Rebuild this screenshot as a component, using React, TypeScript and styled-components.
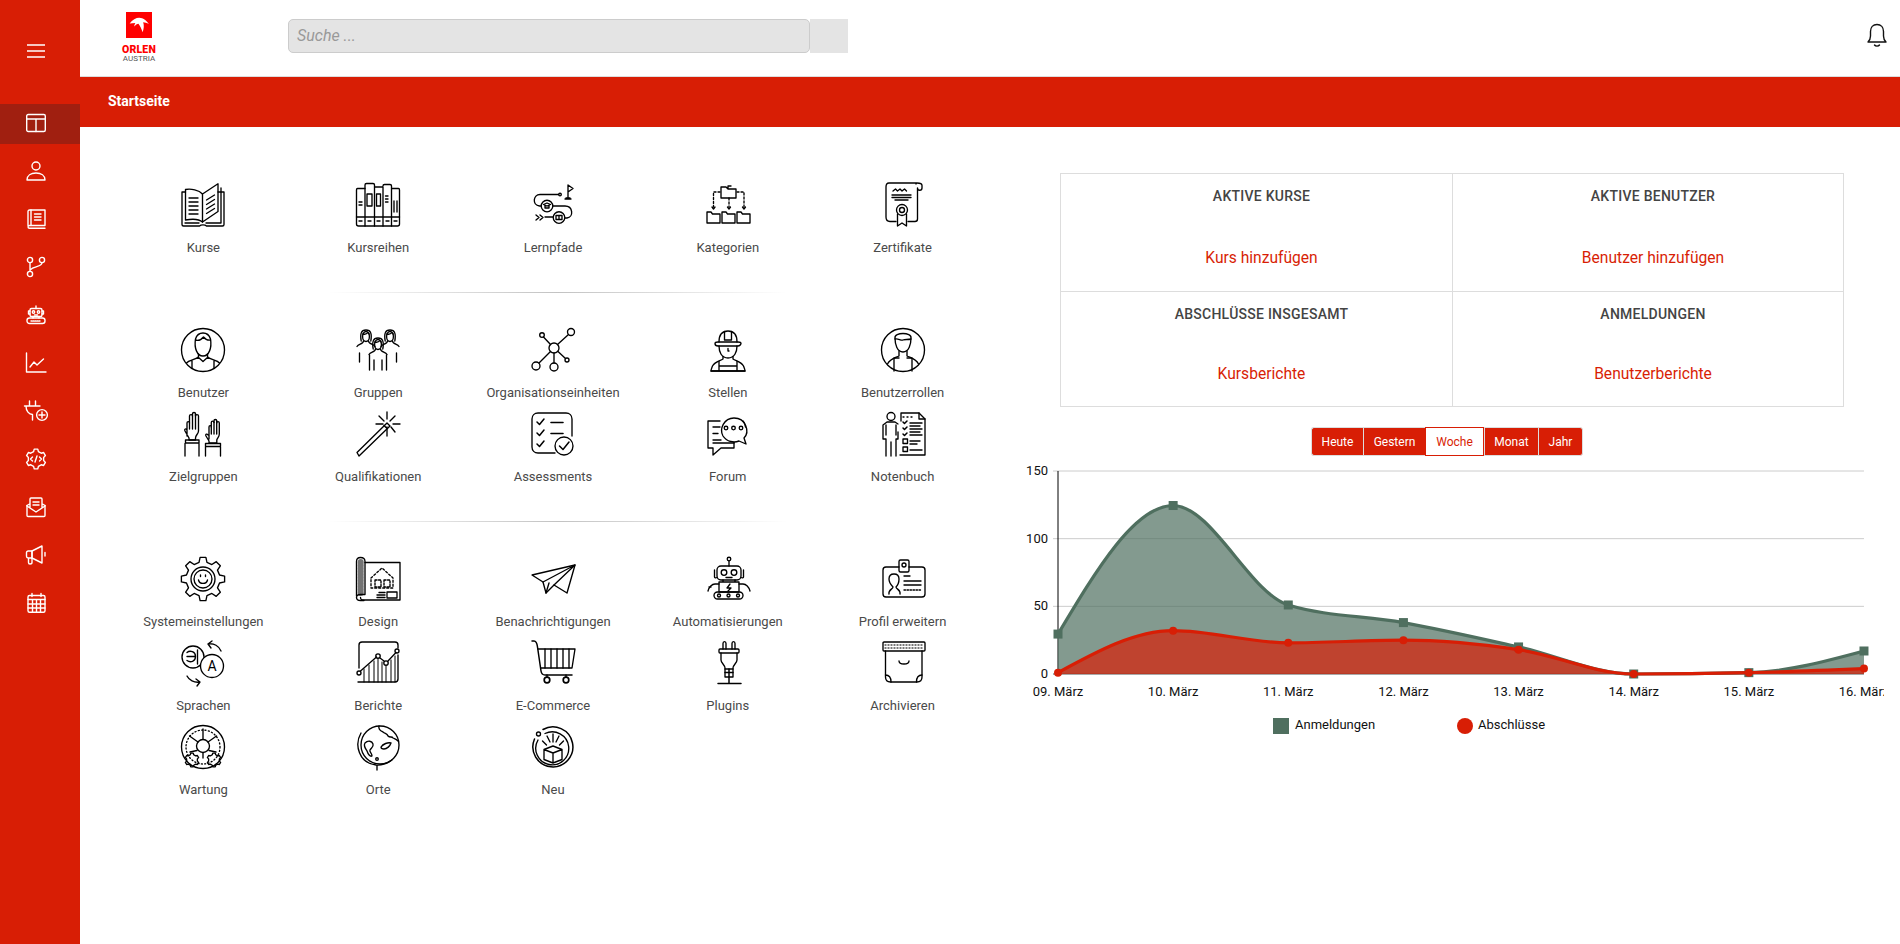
import React from 'react';
import styled, { createGlobalStyle } from 'styled-components';

const RED = '#d81e05';
const GREEN = '#4f6f5f';

const GlobalStyle = createGlobalStyle`
  html, body {
    margin: 0;
    padding: 0;
    background: #fff;
    font-family: Roboto, "Liberation Sans", sans-serif;
  }
  * {
    box-sizing: border-box;
  }
`;

const Page = styled.div`
  display: flex;
  min-height: 100vh;
  overflow: hidden;
`;

const Sidebar = styled.nav`
  width: 80px;
  flex: none;
  background: ${RED};
  display: flex;
  flex-direction: column;
  gap: 8px;
`;

const MenuButton = styled.div`
  height: 96px;
  padding: 44px 0 0 27px;
  svg {
    display: block;
  }
`;

const SideItem = styled.div<{ $active?: boolean }>`
  height: 40px;
  display: flex;
  align-items: center;
  padding: 0 0 2px 26px;
  background: ${props => (props.$active ? '#a01f10' : 'transparent')};
`;

const SideIcon = styled.svg`
  width: 20px;
  height: 20px;
  overflow: visible;
  fill: none;
  stroke: #fff;
  stroke-width: 1.4;
  stroke-linecap: round;
  stroke-linejoin: round;
`;

const Content = styled.div`
  flex: 1;
  min-width: 0;
`;

const Header = styled.header`
  height: 77px;
  background: #fff;
  border-bottom: 1px solid #ddd;
  display: flex;
  align-items: flex-start;
  padding-left: 40px;
  position: relative;
`;

const Logo = styled.div`
  width: 38px;
  padding-top: 12px;
  display: flex;
  flex-direction: column;
  align-items: center;
  svg {
    display: block;
  }
`;

const LogoName = styled.span`
  margin-top: 6px;
  font-size: 10.5px;
  line-height: 11px;
  font-weight: 900;
  color: #f00;
  letter-spacing: 0.2px;
`;

const LogoCountry = styled.span`
  font-size: 8px;
  line-height: 8px;
  color: #555;
`;

const Search = styled.div`
  display: flex;
  margin: 19px 0 0 130px;
`;

const SearchInput = styled.div`
  width: 522px;
  height: 34px;
  background: #e4e4e4;
  border: 1px solid #ccc;
  border-radius: 5px;
  padding-left: 8px;
  font-style: italic;
  font-size: 16px;
  line-height: 32px;
  color: #999;
`;

const SearchButton = styled.div`
  width: 38px;
  height: 34px;
  background: #e4e4e4;
`;

const Bell = styled.svg`
  position: absolute;
  right: 13px;
  top: 23px;
  width: 20px;
  height: 24px;
  fill: none;
  stroke: #111;
  stroke-width: 1.4;
  stroke-linecap: round;
  stroke-linejoin: round;
`;

const Breadcrumb = styled.div`
  height: 50px;
  background: ${RED};
  padding-left: 28px;
  color: #fff;
  font-size: 14px;
  font-weight: 700;
  line-height: 48px;
`;

const Main = styled.main`
  display: flex;
  align-items: flex-start;
  padding-left: 36px;
`;

const LeftPanel = styled.section`
  width: 874px;
  padding-top: 56px;
`;

const TileGrid = styled.div`
  display: grid;
  grid-template-columns: repeat(5, 1fr);
`;

const Tile = styled.div`
  height: 84px;
  display: flex;
  flex-direction: column;
  align-items: center;
  white-space: nowrap;
`;

const TileIcon = styled.svg`
  width: 44px;
  height: 44px;
  flex: none;
  overflow: visible;
  fill: none;
  stroke: #000;
  stroke-width: 1.35;
  stroke-linecap: round;
  stroke-linejoin: round;
  margin-bottom: 12px;
`;

const TileLabel = styled.span`
  font-size: 13px;
  line-height: 18px;
  color: #4a4a4a;
`;

const Divider = styled.hr`
  width: 460px;
  height: 1px;
  border: 0;
  margin: 25px 0 35px 212px;
  background: linear-gradient(to right, rgba(0, 0, 0, 0), rgba(0, 0, 0, 0.24) 50%, rgba(0, 0, 0, 0));
`;

const RightPanel = styled.section`
  width: 864px;
  margin-left: 30px;
  padding-top: 46px;
`;

const StatsTable = styled.div`
  width: 784px;
  height: 234px;
  margin-left: 40px;
  display: grid;
  grid-template-columns: 391px 1fr;
  grid-template-rows: 117px 1fr;
  border: 1px solid #ddd;
`;

const StatCell = styled.div<{ $right?: boolean; $bottom?: boolean }>`
  display: flex;
  flex-direction: column;
  align-items: center;
  padding: 13px 0 0 10px;
  border-left: ${props => (props.$right ? '1px solid #ddd' : '0')};
  border-top: ${props => (props.$bottom ? '1px solid #ddd' : '0')};
`;

const StatTitle = styled.div`
  font-size: 14px;
  line-height: 18px;
  font-weight: 500;
  color: #444;
  text-transform: uppercase;
  letter-spacing: 0.25px;
`;

const StatLink = styled.a<{ $bottom?: boolean }>`
  margin-top: ${props => (props.$bottom ? '40px' : '42px')};
  font-size: 15.6px;
  line-height: 22px;
  color: ${RED};
`;

const RangeGroup = styled.div`
  display: flex;
  justify-content: center;
  margin: 20px 0 0;
  padding-right: 10px;
`;

const RangeButton = styled.button<{ $active?: boolean; $w: number }>`
  width: ${props => props.$w}px;
  height: 29px;
  padding: 0;
  font-family: inherit;
  font-size: 12px;
  color: ${props => (props.$active ? RED : '#fff')};
  background: ${props => (props.$active ? '#fff' : RED)};
  border: 1px solid ${props => (props.$active ? RED : '#ddd')};
  border-width: ${props => (props.$active ? '1px' : '1px 0 1px 1px')};
  &:first-child {
    border-radius: 3px 0 0 3px;
  }
  &:last-child {
    border-radius: 0 3px 3px 0;
    border-right-width: 1px;
  }
`;

const ChartSvg = styled.svg`
  display: block;
  width: 864px;
  height: 280px;
  margin-top: 4px;
  font-family: Roboto, sans-serif;
  font-size: 13px;
`;

const gearPath = (cx: number, cy: number, ro: number, ri: number, teeth: number) => {
  const step = (Math.PI * 2) / teeth;
  const pt = (r: number, a: number) =>
    `${(cx + r * Math.sin(a)).toFixed(2)} ${(cy - r * Math.cos(a)).toFixed(2)}`;
  let d = '';
  for (let i = 0; i < teeth; i++) {
    const a = i * step;
    d += `${i === 0 ? 'M' : 'L'}${pt(ro, a - step * 0.17)}L${pt(ro, a + step * 0.17)}L${pt(ri, a + step * 0.3)}L${pt(ri, a + step * 0.7)}`;
  }
  return d + 'Z';
};

const sideIcons: React.ReactNode[] = [
  <>
    <rect x=".7" y="1.500" width="18.600" height="17" rx="1.500" />
    <path d="M.7 6h18.600M10 6v12.500" />
  </>,
  <>
    <circle cx="10" cy="5" r="4" />
    <path d="M1 19c0-4.500 4-7 9-7s9 2.500 9 7z" />
  </>,
  <>
    <path d="M2 16.500V2.500C2 1.500 2.500 1 3.500 1H19v15.500H3.500C2.500 16.500 2 17 2 17.800S2.500 19.300 3.500 19.300H19" />
    <path d="M5 1v15.500M8.500 5H15M8.500 8H15M8.500 11H15" />
  </>,
  <>
    <circle cx="4" cy="3" r="2.600" />
    <circle cx="4" cy="17" r="2.600" />
    <circle cx="16" cy="3" r="2.600" />
    <path d="M4 5.600v8.800M16 5.600C16 10.500 8 8.500 4 13" />
  </>,
  <>
    <rect x="4" y="3.500" width="12" height="8" rx="1.500" />
    <circle cx="7.500" cy="7" r="1.200" />
    <circle cx="12.500" cy="7" r="1.200" />
    <path d="M10 3.500V1M4 6H2.500v3H4M16 6h1.500v3H16M8.500 10h3M7 11.500v1.500M13 11.500v1.500" />
    <rect x="1" y="13" width="18" height="5.500" rx="2.500" />
    <path d="M5 16h10" strokeDasharray="1 1" />
  </>,
  <>
    <path d="M.5 0V19H20" />
    <path d="M4 14l4-5 3 3 6.500-6" />
  </>,
  <>
    <path d="M3.500 0v4.500M9.500 0v4.500M-1.500 5H14M0 5c0 5 3 8.500 6.500 8.500M6.500 13.500V19" />
    <circle cx="16" cy="14" r="5.400" />
    <path d="M16 11v6M13 14h6" />
  </>,
  <>
    <path d={gearPath(10, 10, 10, 7.800, 6)} />
    <path d="M6.500 8L4.500 10l2 2M13.500 8l2 2-2 2M11 7L9 13" />
  </>,
  <>
    <path d="M1 8.500v10c0 .6.4 1 1 1h16c.6 0 1-.4 1-1v-10" />
    <path d="M4 11V2c0-.6.4-1 1-1h10c.6 0 1 .4 1 1v9M1 8.500l2.500-1.500M19 8.500L16.500 7M1 9l9 6 9-6" />
    <path d="M7 5h6M7 8h6" />
  </>,
  <>
    <path d="M6 6l10-5v17L6 13z" />
    <path d="M6 6H2.200C1.200 6 .5 6.700 .5 7.700v3.600c0 1 .7 1.700 1.700 1.700H6zM2.500 13v4.500c0 1 .8 1.500 1.500 1.500s2-.5 2-1.500V13M19 7.500v3.500" />
  </>,
  <>
    <rect x="2" y="2.500" width="17" height="16.800" rx="1.500" />
    <path d="M2 6.500h17M6 .5v3M15 .5v3M2 11h17M2 15h17M6.500 6.500v12.800M10.500 6.500v12.800M14.500 6.500v12.800" />
  </>,
];

type TileDef = { label: string; icon: React.ReactNode };

const smallPerson = (
  <>
    <ellipse cx="0" cy="6.500" rx="3.400" ry="5" />
    <path d="M-4.800 11C-6 4-5 0 0 0s6 4 4.800 11M-2.500 11c0 3-5 3-6.500 5.500M2.500 11c0 3 5 3 6.500 5.500M-3.200 4c2 .5 4 0 5-1.500 .5 1 1 1.500 1.500 1.500" />
  </>
);

const tiles: TileDef[][] = [
  [
    {
      label: 'Kurse',
      icon: (
        <>
          <path d="M21.500 11C18 7 10 5.500 4.500 6.500V37C10 36 18 36 21.500 39" />
          <path d="M21.500 11L37 .8V28.500L21.500 39z" />
          <path d="M4.500 9H1v32.500c0 1 .5 1.500 1.500 1.500H18.500c1.500-1.500 5.500-1.500 7 0H41.500c1 0 1.500-.5 1.500-1.500V9h-6" />
          <path d="M40 5v35H25M4 40H18" />
          <path d="M8 15h9M8 19h9M8 23h9M8 27h9M8 31h9M25.500 17l8-5M25.500 21.500l8-5M25.500 26l8-5M25.500 30.500l8-5" />
        </>
      ),
    },
    {
      label: 'Kursreihen',
      icon: (
        <>
          <path d="M9 5.500H1.500C.7 5.500.5 6 .5 7V41c0 1.300.7 2 2 2H41.500c1.300 0 2-.7 2-2V7c0-1-.2-1.500-1-1.500H36" />
          <path d="M9 43V2c0-1 .5-1.500 1.500-1.500H17c1 0 1.500.5 1.500 1.500V43M18.500 4H27V43M27 3c0-1 .5-1.500 1.500-1.500H34c1 0 1.500.5 1.500 1.500V43" />
          <path d="M.5 34H43.500" />
          <rect x="11" y="11" width="5" height="12" />
          <rect x="20.500" y="11" width="4" height="12" />
          <path d="M3 19h3M3 22h3M29.500 13h2.500M29.500 16h2.500M29.500 19h2.500M38 18v11M41 18v11M3 38h3M12 38h3M21 38h3M30 38h3M38 38h3" />
        </>
      ),
    },
    {
      label: 'Lernpfade',
      icon: (
        <>
          <path d="M37 15V2l5 3.500L37 9M34 16h6M35 16v-1h4v1" />
          <circle cx="29" cy="11.500" r="1.300" />
          <path d="M27.500 11.500H9C2 11.500 1 22 8.500 23H10M22 23H34C42 23 43 34 36 35H34M22 34H14" />
          <circle cx="16" cy="23" r="5.800" />
          <path d="M12.500 21.500L16 20l3.500 1.500L16 23zM14 22.500v2.500h4v-2.500" />
          <circle cx="28" cy="34.500" r="5.800" />
          <path d="M25 32.500h6v4h-6zM28 32.500v4M5 32l3 2.500L5 37M9 32l3 2.500L9 37" />
        </>
      ),
    },
    {
      label: 'Kategorien',
      icon: (
        <>
          <path d="M15 4h5l2 2h8v9H15zM22 6V3h3" />
          <path d="M14 9H7.500v15M31 9h7v15M23 15v9" strokeDasharray="2 2" />
          <path d="M6 24l1.500 2 1.500-2M21.500 24l1.500 2 1.500-2M36.500 24l1.500 2 1.500-2" />
          <path d="M1 29h4l1.500 2H14V40H1zM16 29h4l1.500 2H29V40H16zM31 29h4l1.500 2H44V40H31z" />
        </>
      ),
    },
    {
      label: 'Zertifikate',
      icon: (
        <>
          <path d="M36 0H8C5.500 0 5 2 5 4V34C5 37 7 38.500 9 38.500H15M27 38.500H34c1.500 0 2.500-1 2.500-2.500V5c0 3 4.500 3 4.500 0V2.500C41 1 39 0 36 0c-1 0-1 1-1 1" />
          <path d="M12 8l2.500-2 2 2 2.500-2 2 2 2.500-2 2 2M11 12H30M11 14.500H30M14 17H27" />
          <circle cx="21" cy="27" r="5.500" />
          <circle cx="21" cy="27" r="2.500" />
          <path d="M16.500 31v12l4.500-3 4.500 3V31" />
        </>
      ),
    },
  ],
  [
    {
      label: 'Benutzer',
      icon: (
        <>
          <circle cx="22" cy="22" r="21.500" />
          <path d="M14.500 11C13 20 16 28 22 28s9-8 7.500-17C27 3 17 3 14.500 11z" />
          <path d="M14.500 12c3 1 6-.5 8-3 2 2.500 4 3.500 7 3" />
          <path d="M17.500 26v3C14 32 8 32 5.500 35M26.500 26v3C30 32 36 32 38.500 35M17 29l5 4.500L27 29M11 33v7M33 33v7" />
        </>
      ),
    },
    {
      label: 'Gruppen',
      icon: (
        <>
          <g transform="translate(10 2)">{smallPerson}</g>
          <g transform="translate(34 2)">{smallPerson}</g>
          <g transform="translate(22 10)">{smallPerson}</g>
          <path d="M3.500 25v9M40.500 25v9M13.500 27v15M18 32v10M26 32v10M30.500 27v15" />
        </>
      ),
    },
    {
      label: 'Organisationseinheiten',
      icon: (
        <>
          <circle cx="23" cy="20" r="5" />
          <circle cx="40" cy="4" r="3.500" />
          <circle cx="11" cy="7" r="2.300" />
          <circle cx="36" cy="32" r="2" />
          <circle cx="5" cy="38" r="4" />
          <circle cx="23" cy="39" r="4" />
          <path d="M26.500 16.500L37.500 6.500M19.500 16.500L12.500 9M19.500 23.500L8 35M23 25v10M27 23.500L34.500 30.500" />
        </>
      ),
    },
    {
      label: 'Stellen',
      icon: (
        <>
          <path d="M13 14c0-7 3-11 9-11s9 4 9 11" />
          <path d="M9 15.500C9 14.500 10.500 14 12 14H32c1.500 0 3 .5 3 1.500S33.500 18 32 18H12C10.500 18 9 17 9 15.500z" />
          <path d="M18.500 3.500V12h7V3.500" />
          <path d="M13 18c0 6 2.500 12 9 12s9-6 9-12M22 20.500v2.500h1" />
          <path d="M17 28.500V31C14 33 9 33.500 6.500 38c-.5 1.500-1.500 3.500-1.500 5H39c0-1.500-1-3.500-1.500-5C35 33.500 30 33 27 31v-2.500" />
          <path d="M13 33.500V43M31 33.500V43M13 38H31M5 43H39" />
        </>
      ),
    },
    {
      label: 'Benutzerrollen',
      icon: (
        <>
          <circle cx="22" cy="22" r="21.500" />
          <path d="M14 10C13 4 31 4 30 10c0 6-2 14-8 14s-8-8-8-14z" />
          <path d="M14 11c3-1 6 2 8 1 2-1 5 0 8-1" />
          <path d="M18 23v5C14 30 9 31 6.500 36M26 23v5c4 2 9 3 11.500 8" />
          <path d="M13 30V43M31 30V43M13 30h5M26 30h5" />
        </>
      ),
    },
    {
      label: 'Zielgruppen',
      icon: (
        <>
          <path d="M6 24V11c0-1.800 2.500-1.800 2.500 0V4c0-1.800 3-1.800 3 0V1.800c0-1.800 3-1.800 3 0V4c0-1.800 3-1.800 3 0V19c0 3-3 4-3 7v2H8v-2L4 19c-1-2 1-3 2-1" />
          <path d="M8.500 11v6M11.500 4v13M14.500 2v15" />
          <path d="M4.500 28H18v3H4.500zM4 31.500V44M18 31.500V44" />
          <path d="M28 27V15c0-1.800 2.300-1.800 2.300 0V10.500c0-1.800 2.700-1.800 2.700 0V8.800c0-1.800 2.700-1.800 2.700 0V11c0-1.800 2.600-1.800 2.600 0V22c0 3-2 4-2.500 6v3H28v-2l-3-5c-1-2 1-2.500 2-1" />
          <path d="M30.300 15v7M33 10v12M35.700 9v13" />
          <path d="M24.500 31.500H39.500v3H24.500zM24.500 35V44M39.500 35V44" />
        </>
      ),
    },
    {
      label: 'Qualifikationen',
      icon: (
        <>
          <path d="M1 40.500L31 11l3 3L3 44z" />
          <path d="M28 13.500l3 3M31 0v7M31 15v9M20 12h7M37 12h7M23 4l5 5M39 4l-5 5M35 15l4 5" />
        </>
      ),
    },
    {
      label: 'Assessments',
      icon: (
        <>
          <path d="M24 41H7c-3.500 0-6-2.500-6-6V7c0-3.500 2.500-6 6-6H35c3.500 0 6 2.500 6 6V24" />
          <path d="M6 10l2.500 2.500L13 7M6 21l2.500 2.500L13 18M6 32l2.500 2.500L13 29" strokeWidth="1.500" />
          <path d="M20 10.500H32M20 21.500H32" strokeWidth="1.600" />
          <circle cx="33" cy="34" r="9" />
          <path d="M28.500 34l3.500 3.500L38 30" strokeWidth="1.500" />
        </>
      ),
    },
    {
      label: 'Forum',
      icon: (
        <>
          <path d="M14 9H2V36H7V43L15 36H28V30" />
          <path d="M7 15h7M7 21.500h5M7 28h8M7 31h21" />
          <path d="M17 24c-4-7 1-18 11-18 12 0 16 14 10 20l2 6-7-3c-5 2-12 1-16-5z" fill="#fff" />
          <path d="M37 9c1.500 1.500 2 3 2.500 6" />
          <circle cx="20" cy="16" r="1.800" />
          <circle cx="27.500" cy="16" r="1.800" />
          <circle cx="35" cy="16" r="1.800" />
        </>
      ),
    },
    {
      label: 'Notenbuch',
      icon: (
        <>
          <circle cx="10" cy="4.500" r="4" />
          <path d="M17 12l-3-2H6L2 13V27h3V44M15 27h2V20M15 44V27M10 44V30M5 13v10M15 13v10" />
          <path d="M20 9V1H38L44 7V43H19" />
          <path d="M38 1V7H44" />
          <path d="M22 5h2M26 5h2M30 5h2" strokeDasharray="1 1" />
          <path d="M22 10l1.500 1.500L26 9M22 16l1.500 1.500L26 15M22 22l1.500 1.500L26 21" strokeWidth="1.500" />
          <path d="M29 11H41M29 14H39M29 17H41M29 20H39M29 23H41M29 29H39M29 32H36M29 38H41" />
          <rect x="22" y="27" width="4.500" height="4.500" />
          <rect x="22" y="35" width="4.500" height="4.500" />
        </>
      ),
    },
  ],
  [
    {
      label: 'Systemeinstellungen',
      icon: (
        <>
          <path d={gearPath(22, 22, 21.800, 17, 8)} />
          <circle cx="22" cy="22" r="12" />
          <circle cx="22" cy="22" r="9" />
          <path d="M17.500 23c1 4.500 8 4.500 9 0M19.500 18v1.500M24.500 18v1.500" />
        </>
      ),
    },
    {
      label: 'Design',
      icon: (
        <>
          <path d="M9 5.500H44V43H6" />
          <path d="M.5 39V4.500C.5 2 2 .5 4.500 .5S9 2 9 4.500V37.500H4.500C2 37.500.5 39 .5 40.500S2 43.500 4.500 43.500H8C6 43.500 4.500 42 4.500 40.500" />
          <path d="M4.700 5v31" strokeWidth="6" strokeDasharray="1 2" opacity=".55" />
          <path d="M15 21L26 11l11 10v10H15z" strokeDasharray="2 2" />
          <path d="M19 23h6v7h-6zM28 23h6v7h-6z" strokeDasharray="2 1.500" />
          <rect x="31" y="35" width="10" height="6" strokeWidth="1.300" />
          <path d="M23 35.500h6M21 38h8M21 40.500h8" />
        </>
      ),
    },
    {
      label: 'Benachrichtigungen',
      icon: (
        <>
          <path d="M1 18L44 8 36 36 23 28l-8 8-3-11z" />
          <path d="M12 25L44 8 23 28M15 36l3-10" />
        </>
      ),
    },
    {
      label: 'Automatisierungen',
      icon: (
        <>
          <circle cx="23" cy="2" r="1.800" />
          <path d="M23 4v5" />
          <rect x="11" y="9" width="24" height="14" rx="4" />
          <circle cx="18" cy="15.500" r="2.800" />
          <circle cx="28" cy="15.500" r="2.800" />
          <path d="M20 20.500H26M8.500 13v7c0 1 1.500 1 2.500 .5M37.500 13v7c0 1-1.500 1-2.500 .5" />
          <path d="M13 25H33V35H13zM17 23v2M29 23v2" />
          <path d="M24 27l-3 4h4l-3 3" strokeWidth="1.300" />
          <path d="M13 27H9C6 27 3 30 2 34M33 27h4c3 0 6 3 7 7M5 30l-2 0" />
          <rect x="8" y="35" width="29" height="7" rx="3.500" />
          <circle cx="13" cy="38.500" r="1.500" />
          <circle cx="22.500" cy="38.500" r="1.500" />
          <circle cx="32" cy="38.500" r="1.500" />
        </>
      ),
    },
    {
      label: 'Profil erweitern',
      icon: (
        <>
          <path d="M18 10H5C3 10 2 11 2 13V37c0 2 1 3 3 3H41c2 0 3-1 3-3V13c0-2-1-3-3-3H28" />
          <rect x="18" y="3" width="10" height="12" rx="1.500" />
          <circle cx="23" cy="8" r="2" />
          <path d="M8 37c-1-4 4-5 4-7-2-2-4-5-4-8 0-3 2-5 5-5s5 2 5 5c0 3-1 6-3 8 0 2 5 3 4 7" />
          <path d="M23 19h6M23 24H40M23 28H40" />
          <path d="M23 33H40" strokeDasharray="1.500 1.500" />
        </>
      ),
    },
    {
      label: 'Sprachen',
      icon: (
        <>
          <circle cx="12" cy="16" r="11" />
          <circle cx="31" cy="25" r="11.500" fill="#fff" />
          <path d="M6 11.500c3-2.500 8.500-1 8.500 4s-5 6.500-8.500 4M6 15.500h8.500M16.500 9v14" />
          <text x="31" y="30" textAnchor="middle" fontFamily="Roboto, sans-serif" fontSize="14" fill="#000" stroke="none">A</text>
          <path d="M27 3c6-1 11 2 13 7M31 0l-4 3 3 4" />
          <path d="M19 41c-6 1-11-2-13-6M15 38l4 3-3 4" />
        </>
      ),
    },
    {
      label: 'Berichte',
      icon: (
        <>
          <path d="M3 27V4c0-2 1-3 3-3H39c2 0 3 1 3 3V7M42 14V38c0 2-1 3-3 3H2" />
          <path d="M4.500 30L20.500 16M24 17l4 3M32 20L40 11.500" strokeWidth="1.300" />
          <circle cx="3" cy="32" r="2" />
          <circle cx="22" cy="15" r="2.200" />
          <circle cx="30" cy="22" r="2.200" />
          <circle cx="41" cy="10" r="2" />
          <path d="M8 28V41M13 24V41M18 20V41M22 18V41M26 21V41M30 25V41M35 19V41M39 15V41" strokeWidth="1" />
        </>
      ),
    },
    {
      label: 'E-Commerce',
      icon: (
        <>
          <path d="M1 0H3C5 0 6 2 6.500 6L10 30C10.500 33 12 34 14 34H41" strokeWidth="1.500" />
          <path d="M7 8H44L41 27H10" />
          <path d="M14 8V27M20 8V27M26 8V27M32 8V27M38 8V27" />
          <circle cx="16" cy="39" r="2.800" strokeWidth="1.700" />
          <circle cx="35" cy="39" r="2.800" strokeWidth="1.700" />
          <path d="M16 34v2M35 34v2" />
        </>
      ),
    },
    {
      label: 'Plugins',
      icon: (
        <>
          <path d="M17 8V2.500c0-2.500 3-2.500 3 0V8M26 8V2.500c0-2.500 3-2.500 3 0V8" />
          <rect x="13" y="8" width="20" height="4" rx="1" />
          <path d="M15 12V19c0 3 4 5 4 8V36H27V27c0-3 4-5 4-8V12" />
          <path d="M19 28H27M19 31.500H27" />
          <path d="M23 28V36M23 36V42M12 42.500H35" strokeWidth="1.500" />
        </>
      ),
    },
    {
      label: 'Archivieren',
      icon: (
        <>
          <rect x="2" y="1" width="42" height="9" rx="1" />
          <path d="M4 4h38M4 7h38" strokeDasharray="1 2" opacity=".7" />
          <path d="M4.500 10V36c0 3 2 5 5 5H36c3 0 5-2 5-5V10" />
          <path d="M18 20c0 4 10 4 10 0M4.500 34c3.500 0 5.500 3 5.500 7M41 34c-3.500 0-5.500 3-5.500 7" />
        </>
      ),
    },
    {
      label: 'Wartung',
      icon: (
        <>
          <circle cx="22" cy="22" r="21.500" />
          <circle cx="22" cy="22" r="17" strokeDasharray="1 2.400" />
          <circle cx="22" cy="21" r="6.500" />
          <path d="M17 17L8.500 11M27 17l8.500-6M22 4V14M16 25.500L9 27M28 25.500L35 27M22 28V33" />
          <path d={gearPath(11, 35, 7, 5.500, 6)} />
          <path d={gearPath(33, 35, 7, 5.500, 6)} />
        </>
      ),
    },
    {
      label: 'Orte',
      icon: (
        <>
          <circle cx="24" cy="20" r="19" />
          <path d="M5 8C-2 20 3 38 20 40c6 .5 12-2 16-5M21 40.500V45" />
          <path d="M9 18c3-3 7-2 8 1 1 3-2 4-3 6s2 3 2 6c-2 1-4-2-5-5-1-2-4-5-2-8z" />
          <path d="M23 1c-1 4 2 5 4 6 2 2 4 1 5 4 2 2 4 0 5 2 2 1 3 1 5 3" />
          <path d="M25 22c2-3 7-5 10-4-1 3-4 6-7 6-2 0-3-1-3-2z" />
          <circle cx="21" cy="34" r="1.300" />
        </>
      ),
    },
    {
      label: 'Neu',
      icon: (
        <>
          <path d="M12 4.500A20 20 0 1 1 3.500 14" strokeWidth="1.500" />
          <path d="M14 8.500A16.500 16.500 0 1 1 7 15" />
          <circle cx="7.500" cy="9" r="2" />
          <path d="M22 21l9 3.500v10L22 38l-9-3.500v-10zM13 24.500L22 28l9-3.500M22 28v10" />
          <path d="M22 9v8M16 11l3 6M28 11l-3 6M11.500 16l4 4M32.500 16l-4 4" />
        </>
      ),
    },
  ],
];

// d3 curveMonotoneX for the two series
const monotone = (pts: [number, number][]) => {
  const n = pts.length;
  const slope = (i: number) => (pts[i + 1][1] - pts[i][1]) / (pts[i + 1][0] - pts[i][0]);
  const m: number[] = [];
  for (let i = 1; i < n - 1; i++) {
    const s0 = slope(i - 1);
    const s1 = slope(i);
    m[i] = s0 * s1 <= 0 ? 0 : Math.sign(s0) * 2 * Math.min(Math.abs(s0), Math.abs(s1), 0.25 * Math.abs(s0 + s1));
  }
  m[0] = (3 * slope(0) - m[1]) / 2;
  m[n - 1] = (3 * slope(n - 2) - m[n - 2]) / 2;
  let d = `M${pts[0][0]} ${pts[0][1]}`;
  for (let i = 0; i < n - 1; i++) {
    const h = (pts[i + 1][0] - pts[i][0]) / 3;
    d += `C${pts[i][0] + h} ${pts[i][1] + h * m[i]} ${pts[i + 1][0] - h} ${pts[i + 1][1] - h * m[i + 1]} ${pts[i + 1][0]} ${pts[i + 1][1]}`;
  }
  return d;
};

const X0 = 38;
const XSTEP = 115.14;
const Y0 = 214;
const YUNIT = 203 / 150;
const days = ['09. März', '10. März', '11. März', '12. März', '13. März', '14. März', '15. März', '16. März'];
const signups = [29.5, 124.5, 51, 38, 20, 0, 1, 17];
const finished = [1, 32, 23, 25, 18, 0, 1, 4];

const toPoints = (values: number[]) =>
  values.map((v, i): [number, number] => [X0 + i * XSTEP, Y0 - v * YUNIT]);

const Chart: React.FC = () => {
  const a = toPoints(signups);
  const b = toPoints(finished);
  const xEnd = X0 + 7 * XSTEP;
  const area = (pts: [number, number][]) => `${monotone(pts)}L${xEnd} ${Y0}L${X0} ${Y0}Z`;
  return (
    <ChartSvg viewBox="0 0 864 280">
      {[0, 50, 100, 150].map(v => {
        const y = Y0 - v * YUNIT;
        return (
          <g key={v}>
            <line x1={X0 - 5} x2={xEnd} y1={y} y2={y} stroke={v === 0 ? '#555' : '#ccc'} />
            <text x={X0 - 10} y={y + 4} textAnchor="end" fill="#111">{v}</text>
          </g>
        );
      })}
      <line x1={X0} x2={X0} y1={Y0 - 150 * YUNIT} y2={Y0} stroke="#000" />
      <path d={area(a)} fill={GREEN} fillOpacity={0.7} />
      <path d={monotone(a)} fill="none" stroke={GREEN} strokeWidth={3.2} />
      {a.map(([x, y]) => (
        <rect key={x} x={x - 4.5} y={y - 4.5} width={9} height={9} fill={GREEN} />
      ))}
      <path d={area(b)} fill={RED} fillOpacity={0.7} />
      <path d={monotone(b)} fill="none" stroke={RED} strokeWidth={3.2} />
      {b.map(([x, y]) => (
        <circle key={x} cx={x} cy={y} r={4} fill={RED} />
      ))}
      {days.map((d, i) => (
        <text key={d} x={X0 + i * XSTEP} y={236} textAnchor="middle" fill="#111">{d}</text>
      ))}
      <rect x={253} y={258} width={16} height={16} fill={GREEN} />
      <text x={275} y={269} fill="#111">Anmeldungen</text>
      <circle cx={445} cy={266} r={8} fill={RED} />
      <text x={458} y={269} fill="#111">Abschlüsse</text>
    </ChartSvg>
  );
};

const stats = [
  { title: 'Aktive Kurse', link: 'Kurs hinzufügen' },
  { title: 'Aktive Benutzer', link: 'Benutzer hinzufügen' },
  { title: 'Abschlüsse insgesamt', link: 'Kursberichte' },
  { title: 'Anmeldungen', link: 'Benutzerberichte' },
];

const ranges = [
  { label: 'Heute', w: 52 },
  { label: 'Gestern', w: 62 },
  { label: 'Woche', w: 59, active: true },
  { label: 'Monat', w: 54 },
  { label: 'Jahr', w: 45 },
];

const App: React.FC = () => (
  <Page>
    <GlobalStyle />
    <Sidebar>
      <MenuButton>
        <svg width="18" height="14" viewBox="0 0 18 14" fill="none" stroke="#fff" strokeWidth="1.500">
          <path d="M0 1h18M0 7h18M0 13h18" />
        </svg>
      </MenuButton>
      {sideIcons.map((icon, i) => (
        <SideItem key={i} $active={i === 0}>
          <SideIcon viewBox="0 0 20 20">{icon}</SideIcon>
        </SideItem>
      ))}
    </Sidebar>
    <Content>
      <Header>
        <Logo>
          <svg width="26" height="26" viewBox="0 0 25 25">
            <rect width="25" height="25" fill="#f00" />
            <path d="M3.500 11C7 6 12 4.500 15.500 6c2 .6 4.500 3 6.500 5.500-2-1-3.800-1.500-5.500-1.700 1 2.700 .8 6-.5 9.700-1-3-2.200-6-4-8.300-1.500.3-2.800 1-4 2.800 0-1.200.2-2.400 1-3.500-2 0-4 .2-5.500 .5z" fill="#fff" />
          </svg>
          <LogoName>ORLEN</LogoName>
          <LogoCountry>AUSTRIA</LogoCountry>
        </Logo>
        <Search>
          <SearchInput>Suche ...</SearchInput>
          <SearchButton />
        </Search>
        <Bell viewBox="0 0 20 24">
          <path d="M1 19c1.500-1.500 2.500-3 2.500-6V8.500C3.500 4.500 6 1.500 10 1.500s6.500 3 6.500 7V13c0 3 1 4.500 2.500 6z" />
          <path d="M7.500 22c1 1.500 4 1.500 5 0" />
        </Bell>
      </Header>
      <Breadcrumb>Startseite</Breadcrumb>
      <Main>
        <LeftPanel>
          {tiles.map((group, g) => (
            <React.Fragment key={g}>
              {g > 0 && <Divider />}
              <TileGrid>
                {group.map(t => (
                  <Tile key={t.label}>
                    <TileIcon viewBox="0 0 44 44">{t.icon}</TileIcon>
                    <TileLabel>{t.label}</TileLabel>
                  </Tile>
                ))}
              </TileGrid>
            </React.Fragment>
          ))}
        </LeftPanel>
        <RightPanel>
          <StatsTable>
            {stats.map((s, i) => (
              <StatCell key={s.title} $right={i % 2 === 1} $bottom={i > 1}>
                <StatTitle>{s.title}</StatTitle>
                <StatLink $bottom={i > 1}>{s.link}</StatLink>
              </StatCell>
            ))}
          </StatsTable>
          <RangeGroup>
            {ranges.map(r => (
              <RangeButton key={r.label} $w={r.w} $active={r.active}>{r.label}</RangeButton>
            ))}
          </RangeGroup>
          <Chart />
        </RightPanel>
      </Main>
    </Content>
  </Page>
);

export default App;
